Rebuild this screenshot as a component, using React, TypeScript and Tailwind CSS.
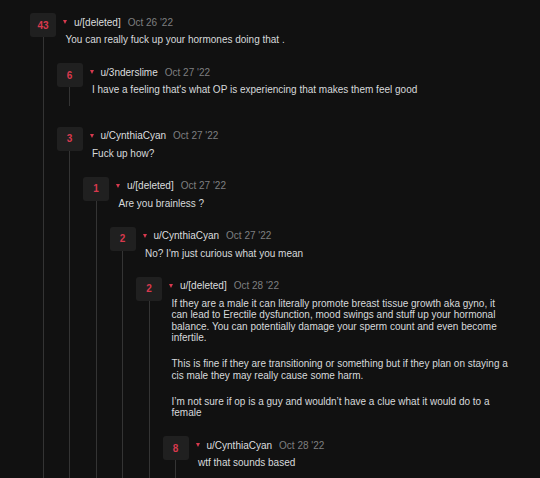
type CommentData = {
  votes: number;
  user: string;
  date: string;
  body: string[];
  replies?: CommentData[];
};

const thread: CommentData = {
  votes: 43,
  user: "u/[deleted]",
  date: "Oct 26 '22",
  body: ["You can really fuck up your hormones doing that ."],
  replies: [
    {
      votes: 6,
      user: "u/3nderslime",
      date: "Oct 27 '22",
      body: ["I have a feeling that's what OP is experiencing that makes them feel good"],
    },
    {
      votes: 3,
      user: "u/CynthiaCyan",
      date: "Oct 27 '22",
      body: ["Fuck up how?"],
      replies: [
        {
          votes: 1,
          user: "u/[deleted]",
          date: "Oct 27 '22",
          body: ["Are you brainless ?"],
          replies: [
            {
              votes: 2,
              user: "u/CynthiaCyan",
              date: "Oct 27 '22",
              body: ["No? I'm just curious what you mean"],
              replies: [
                {
                  votes: 2,
                  user: "u/[deleted]",
                  date: "Oct 28 '22",
                  body: [
                    "If they are a male it can literally promote breast tissue growth aka gyno, it can lead to Erectile dysfunction, mood swings and stuff up your hormonal balance. You can potentially damage your sperm count and even become infertile.",
                    "This is fine if they are transitioning or something but if they plan on staying a cis male they may really cause some harm.",
                    "I\u2019m not sure if op is a guy and wouldn\u2019t have a clue what it would do to a female",
                  ],
                  replies: [
                    {
                      votes: 8,
                      user: "u/CynthiaCyan",
                      date: "Oct 28 '22",
                      body: ["wtf that sounds based"],
                    },
                  ],
                },
              ],
            },
          ],
        },
      ],
    },
  ],
};

function Comment({ c }: { c: CommentData }) {
  const hasReplies = !!c.replies && c.replies.length > 0;
  return (
    <div className="flex">
      <div className="w-[26.5px] shrink-0 flex flex-col">
        <div className="w-[26px] h-[24px] rounded-[3px] bg-[#202020] flex items-center justify-center text-[10px] font-bold text-[#d8394d]">
          {c.votes}
        </div>
        <div className="w-[26px] flex-1 flex justify-center">
          <div className="w-px bg-[#343434]" />
        </div>
      </div>
      <div className="flex-1 min-w-0">
        <div className="h-[18px] flex items-center ml-[6.5px] text-[10px]">
          <svg width="4" height="4" viewBox="0 0 4 4" className="shrink-0">
            <path d="M0 0H4L2 4Z" fill="#d8394d" />
          </svg>
          <span className="ml-[7px] text-[#dcdedf]">{c.user}</span>
          <span className="ml-[7px] text-[#7e7f80]">{c.date}</span>
        </div>
        <div
          className={`ml-[9px] mt-[3px] text-[10px] leading-[11.5px] text-[#d7dadc] flex flex-col gap-[14.5px] ${
            hasReplies ? "" : "pb-[10px]"
          }`}
        >
          {c.body.map((p, i) => (
            <p key={i}>{p}</p>
          ))}
        </div>
        {hasReplies && (
          <div className="mt-[17.5px] flex flex-col gap-[21px]">
            {c.replies!.map((r, i) => (
              <Comment key={i} c={r} />
            ))}
          </div>
        )}
      </div>
    </div>
  );
}

export default function App() {
  return (
    <div className="w-[540px] h-[478px] overflow-hidden bg-[#111111] pt-[13px] pl-[30px] pr-[30px] font-['Liberation_Sans',Arial,sans-serif]">
      <Comment c={thread} />
    </div>
  );
}
